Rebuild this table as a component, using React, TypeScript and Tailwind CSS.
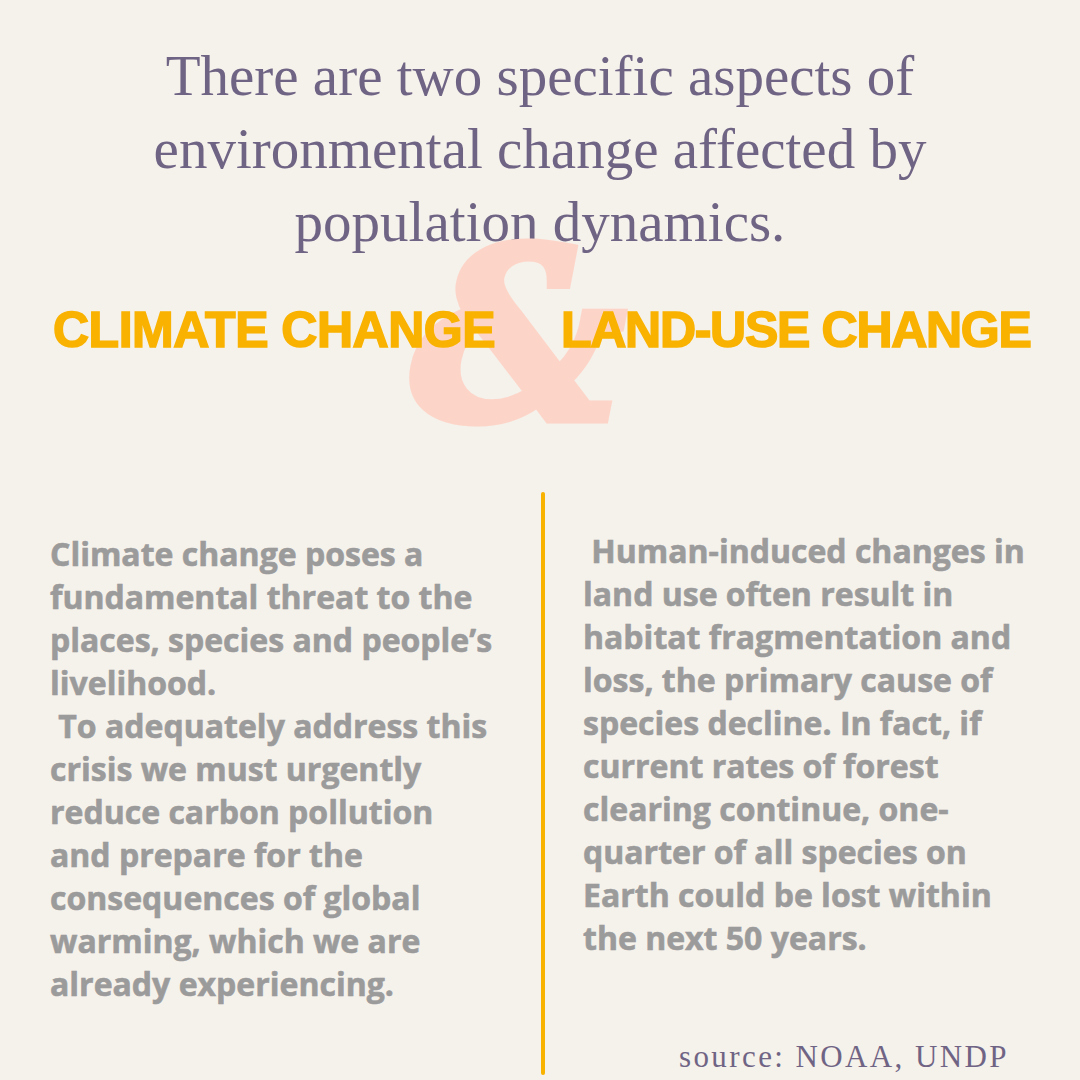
import React from 'react'

const leftLines = [
  'Climate change poses a',
  'fundamental threat to the',
  'places, species and people’s',
  'livelihood.',
  ' To adequately address this',
  'crisis we must urgently',
  'reduce carbon pollution',
  'and prepare for the',
  'consequences of global',
  'warming, which we are',
  'already experiencing.',
]

const rightLines = [
  ' Human-induced changes in',
  'land use often result in',
  'habitat fragmentation and',
  'loss, the primary cause of',
  'species decline. In fact, if',
  'current rates of forest',
  'clearing continue, one-',
  'quarter of all species on',
  'Earth could be lost within',
  'the next 50 years.',
]

function BodyText({ lines }: { lines: string[] }) {
  return (
    <div className="font-['Open_Sans',sans-serif] font-bold text-[32px] leading-[43px] text-[#9b9b9b] whitespace-pre [-webkit-text-stroke:0.6px_#9b9b9b]">
      {lines.map((l, i) => (
        <div key={i}>{l}</div>
      ))}
    </div>
  )
}

export default function App() {
  return (
    <div className="w-[1080px] h-[1080px] bg-[#f5f1eb] flex flex-col overflow-hidden">
      {/* Title */}
      <h1 className="pt-[39px] text-center font-['Liberation_Serif',serif] font-normal text-[57px] leading-[73px] text-[#6f6484]">
        There are two specific aspects of
        <br />
        environmental change affected by
        <br />
        population dynamics.
      </h1>

      {/* Headings with ampersand behind */}
      <div className="relative mt-[48px] h-[49px]">
        <span className="absolute left-[412px] top-[-88px] font-['DejaVu_Serif',serif] font-bold italic text-[236px] leading-none text-[#fdd5c8] [-webkit-text-stroke:9px_#fdd5c8] select-none">
          &amp;
        </span>
        <div className="relative flex font-['Liberation_Sans',sans-serif] font-bold text-[50px] leading-[49px] text-[#f9b200] uppercase [-webkit-text-stroke:1.6px_#f9b200]">
          <span className="ml-[53px] tracking-[-0.5px]">Climate Change</span>
          <span className="ml-[66px] tracking-[-1.3px]">Land-Use Change</span>
        </div>
      </div>

      {/* Two columns */}
      <div className="mt-[137px] flex flex-1">
        <div className="w-[541px] pl-[50px] pt-[40px]">
          <BodyText lines={leftLines} />
        </div>
        <div className="w-[4px] mb-[5px] rounded-full bg-[#f7b300]" />
        <div className="flex-1 pl-[38px] pt-[37px] flex flex-col">
          <BodyText lines={rightLines} />
          <p className="mt-auto mb-[8px] pl-[96px] font-['Liberation_Serif',serif] text-[31px] leading-none tracking-[2.4px] text-[#6f6484]">
            source: NOAA, UNDP
          </p>
        </div>
      </div>
    </div>
  )
}
